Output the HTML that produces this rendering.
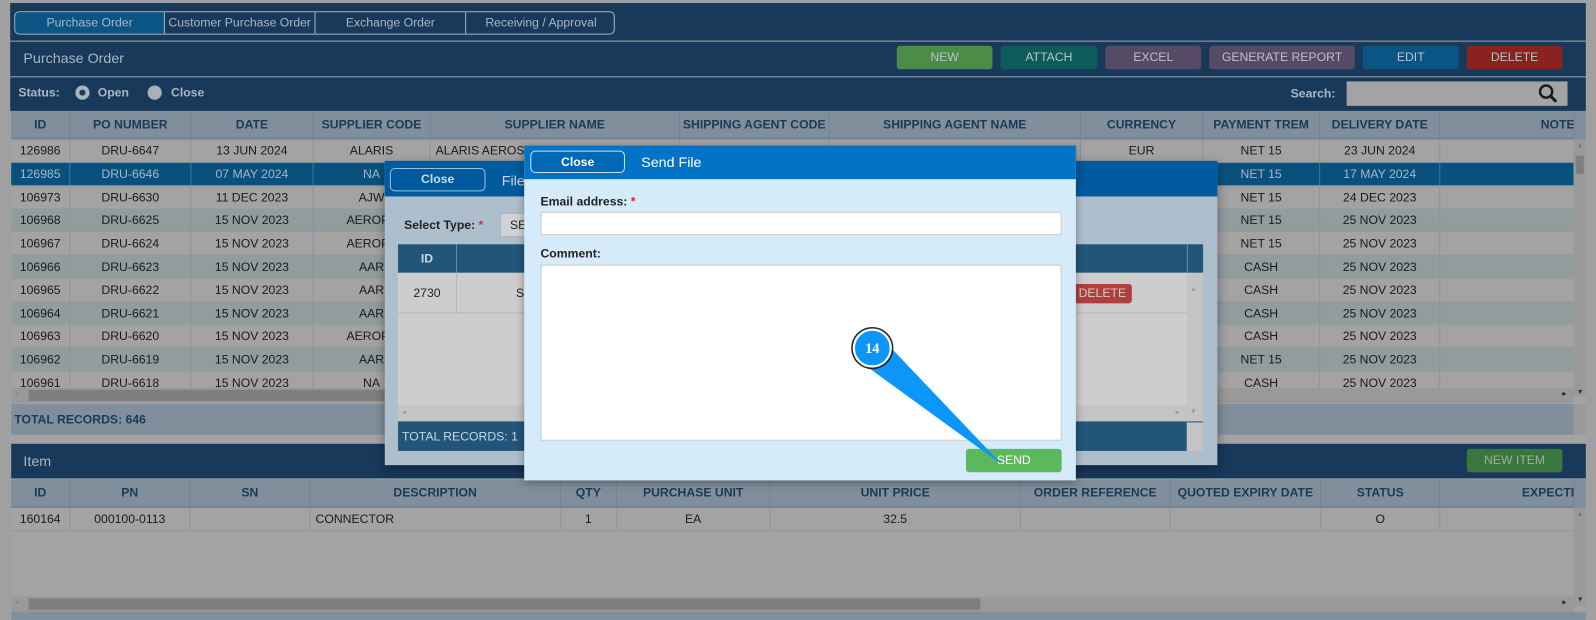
<!DOCTYPE html>
<html><head><meta charset="utf-8">
<style>
html,body{margin:0;padding:0;width:1596px;height:620px;overflow:hidden;background:#a0a0a0;font-family:"Liberation Sans",Arial,sans-serif;}
#w{position:absolute;left:0;top:0;width:1568px;height:609px;transform:scale(1.01786);transform-origin:0 0;}
.a{position:absolute;box-sizing:border-box;}
.bar{background:#18395a;}
.btn{position:absolute;height:23px;top:45px;border-radius:3px;color:#b9c3cc;font-size:12px;text-align:center;line-height:23px;}
.hd{position:absolute;background:#808f9b;color:#1b3a57;font-weight:bold;font-size:12px;overflow:hidden;}
.hd div,.row div{position:absolute;top:0;height:100%;box-sizing:border-box;text-align:center;border-right:1px solid #74848f;}
.hd div{display:flex;align-items:center;justify-content:center;white-space:nowrap;}
.row{position:absolute;left:11px;width:1535px;height:23px;font-size:12px;color:#1a1a1a;line-height:23px;border-bottom:1px solid #979797;box-sizing:border-box;}
.row div{border-right:1px solid #939393;white-space:nowrap;overflow:hidden;}
.r0{background:#a3a3a3;}.r1{background:#909c9e;}
.sel{background:#08517e;color:#a7b8c6;}
.sel div{border-right-color:#3a7aa0;}
</style></head><body><div id="w">
<div class="a" style="left:10px;top:3px;width:1548px;height:606px;background:#a3a3a3;"></div>
<div class="a bar" style="left:10px;top:3px;width:1548px;height:37px;"></div>
<div class="a" style="left:14px;top:11px;width:590px;height:23px;border:1px solid #a9b6c1;border-radius:5px;overflow:hidden;font-size:12px;color:#a9b7c4;line-height:21px;">
 <div class="a" style="left:0;top:0;width:146px;height:21px;background:#0b5584;text-align:center;">Purchase Order</div>
 <div class="a" style="left:146px;top:0;width:148px;height:21px;border-left:1px solid #a9b6c1;text-align:center;">Customer Purchase Order</div>
 <div class="a" style="left:294px;top:0;width:148px;height:21px;border-left:1px solid #a9b6c1;text-align:center;">Exchange Order</div>
 <div class="a" style="left:442px;top:0;width:148px;height:21px;border-left:1px solid #a9b6c1;text-align:center;">Receiving / Approval</div>
</div>
<div class="a" style="left:10px;top:40px;width:1548px;height:1px;background:#8a9aa8;"></div>
<div class="a bar" style="left:10px;top:41px;width:1548px;height:34px;"></div>
<div class="a" style="left:23px;top:49px;font-size:14px;color:#a9b7c4;">Purchase Order</div>
<div class="btn" style="left:881px;width:94px;background:#4a8c48;">NEW</div>
<div class="btn" style="left:983px;width:95px;background:#0d5c59;">ATTACH</div>
<div class="btn" style="left:1086px;width:94px;background:#574a66;">EXCEL</div>
<div class="btn" style="left:1188px;width:143px;background:#574a66;">GENERATE REPORT</div>
<div class="btn" style="left:1339px;width:94px;background:#0b5584;">EDIT</div>
<div class="btn" style="left:1441px;width:94px;background:#8a2220;">DELETE</div>
<div class="a" style="left:10px;top:75px;width:1548px;height:1px;background:#8a9aa8;"></div>
<div class="a bar" style="left:10px;top:76px;width:1548px;height:33px;"></div>
<div class="a" style="left:18px;top:84px;font-size:12px;font-weight:bold;color:#a9b7c4;">Status:</div>
<div class="a" style="left:74px;top:84px;width:14px;height:14px;border-radius:50%;background:#a8b4be;"><div class="a" style="left:4px;top:4px;width:6px;height:6px;border-radius:50%;background:#18395a;"></div></div>
<div class="a" style="left:96px;top:84px;font-size:12px;font-weight:bold;color:#a9b7c4;">Open</div>
<div class="a" style="left:145px;top:84px;width:14px;height:14px;border-radius:50%;background:#a8b0b8;"></div>
<div class="a" style="left:168px;top:84px;font-size:12px;font-weight:bold;color:#a9b7c4;">Close</div>
<div class="a" style="left:1268px;top:85px;font-size:12px;font-weight:bold;color:#a9b7c4;">Search:</div>
<div class="a" style="left:1323px;top:80px;width:217px;height:24px;background:#a3a3a3;"></div>
<svg class="a" style="left:1510px;top:82px" width="22" height="20" viewBox="0 0 22 20"><circle cx="9" cy="8" r="6" fill="none" stroke="#1a1a1a" stroke-width="2.4"/><path d="M13.5 12.5 L18 17" stroke="#1a1a1a" stroke-width="3" stroke-linecap="round"/></svg>
<div class="hd" style="left:11px;top:109px;width:1535px;height:28px;border-bottom:2px solid #72838f;box-sizing:border-box;">
<div style="left:0;width:58px">ID</div><div style="left:58px;width:119px">PO NUMBER</div><div style="left:177px;width:120px">DATE</div><div style="left:297px;width:115px">SUPPLIER CODE</div><div style="left:412px;width:245px">SUPPLIER NAME</div><div style="left:657px;width:147px">SHIPPING AGENT CODE</div><div style="left:804px;width:247px">SHIPPING AGENT NAME</div><div style="left:1051px;width:120px">CURRENCY</div><div style="left:1171px;width:115px">PAYMENT TREM</div><div style="left:1286px;width:118px">DELIVERY DATE</div><div style="left:1404px;width:150px;justify-content:flex-end;border:none;padding-right:10px;">NOTES</div>
</div>
<div class="a" style="left:1546px;top:109px;width:12px;height:28px;background:#808f9b;border-left:1px solid #74848f;"></div>
<div id="rows"></div>
<div class="a" style="left:1546px;top:137px;width:12px;height:252px;background:#9a9a9a;"></div>
<div class="a" style="left:1548px;top:153px;width:8px;height:18px;background:#7e7e7e;"></div>
<div class="a" style="left:1549px;top:140px;font-size:7px;color:#777;">▲</div>
<div class="a" style="left:1549px;top:382px;font-size:7px;color:#333;">▼</div>
<div class="a" style="left:11px;top:381px;width:1535px;height:15px;background:#999;"></div>
<div class="a" style="left:28px;top:383px;width:350px;height:11px;background:#7e7e7e;"></div>
<div class="a" style="left:14px;top:382px;font-size:8px;color:#888;">◂</div>
<div class="a" style="left:1535px;top:382px;font-size:8px;color:#222;">▸</div>
<div class="a" style="left:11px;top:397px;width:1535px;height:30px;background:#808f9b;"></div>
<div class="a" style="left:1546px;top:397px;width:12px;height:30px;background:#9a9a9a;"></div>
<div class="a" style="left:14px;top:405px;font-size:12px;font-weight:bold;color:#1b3a57;">TOTAL RECORDS: 646</div>
<div class="a bar" style="left:11px;top:436px;width:1547px;height:34px;"></div>
<div class="a" style="left:23px;top:445px;font-size:14px;color:#a9b7c4;">Item</div>
<div class="a" style="left:1441px;top:441px;width:94px;height:23px;border-radius:3px;background:#3a773c;color:#9cb0a0;font-size:12px;text-align:center;line-height:23px;">NEW ITEM</div>
<div class="hd" style="left:11px;top:471px;width:1535px;height:28px;border-bottom:2px solid #72838f;box-sizing:border-box;">
<div style="left:0;width:58px">ID</div><div style="left:58px;width:118px">PN</div><div style="left:176px;width:118px">SN</div><div style="left:294px;width:246px">DESCRIPTION</div><div style="left:540px;width:55px">QTY</div><div style="left:595px;width:151px">PURCHASE UNIT</div><div style="left:746px;width:246px">UNIT PRICE</div><div style="left:992px;width:147px">ORDER REFERENCE</div><div style="left:1139px;width:148px">QUOTED EXPIRY DATE</div><div style="left:1287px;width:117px">STATUS</div><div style="left:1404px;width:190px;justify-content:flex-end;border:none;padding-right:10px;">EXPECTED DATE</div>
</div>
<div class="a" style="left:1546px;top:471px;width:12px;height:28px;background:#808f9b;border-left:1px solid #74848f;"></div>
<div class="row r0" style="top:499px;">
<div style="left:0;width:58px">160164</div><div style="left:58px;width:118px">000100-0113</div><div style="left:176px;width:118px"></div><div style="left:294px;width:246px;text-align:left;padding-left:5px">CONNECTOR</div><div style="left:540px;width:55px">1</div><div style="left:595px;width:151px">EA</div><div style="left:746px;width:246px">32.5</div><div style="left:992px;width:147px"></div><div style="left:1139px;width:148px"></div><div style="left:1287px;width:117px">O</div><div style="left:1404px;width:131px;border:none"></div>
</div>
<div class="a" style="left:1546px;top:499px;width:12px;height:97px;background:#9a9a9a;"></div>
<div class="a" style="left:1549px;top:502px;font-size:7px;color:#777;">▲</div>
<div class="a" style="left:1549px;top:586px;font-size:7px;color:#333;">▼</div>
<div class="a" style="left:11px;top:586px;width:1535px;height:15px;background:#999;"></div>
<div class="a" style="left:28px;top:588px;width:935px;height:11px;background:#7e7e7e;"></div>
<div class="a" style="left:14px;top:587px;font-size:8px;color:#888;">◂</div>
<div class="a" style="left:1535px;top:587px;font-size:8px;color:#222;">▸</div>
<div class="a" style="left:11px;top:601px;width:1547px;height:8px;background:#808f9b;"></div>

<div class="a" style="left:378px;top:158px;width:818px;height:299px;background:#adbfcc;box-shadow:0 4px 10px rgba(0,0,0,.4);"></div>
<div class="a" style="left:378px;top:158px;width:818px;height:35px;background:#005a9e;"></div>
<div class="a" style="left:383px;top:165px;width:94px;height:23px;border:1px solid #9ec0dc;border-radius:5px;color:#c9dced;font-size:12px;font-weight:bold;text-align:center;line-height:21px;">Close</div>
<div class="a" style="left:493px;top:169px;font-size:14px;color:#c9dced;">File</div>
<div class="a" style="left:397px;top:214px;font-size:12px;font-weight:bold;color:#222;">Select Type: <span style="color:#c33">*</span></div>
<div class="a" style="left:491px;top:209px;width:40px;height:24px;background:#cfd3d6;border:1px solid #aab;font-size:12px;line-height:22px;padding-left:9px;color:#222;">SE</div>
<div class="a" style="left:391px;top:240px;width:791px;height:28px;background:#22557a;"></div>
<div class="a" style="left:391px;top:240px;width:58px;height:28px;color:#c9d6e2;font-size:12px;font-weight:bold;text-align:center;line-height:28px;border-right:1px solid #6a8aa8;">ID</div>
<div class="a" style="left:1166px;top:240px;width:1px;height:28px;background:#6a8aa8;"></div>
<div class="a" style="left:391px;top:268px;width:775px;height:130px;background:#cdcdcd;"></div>
<div class="a" style="left:391px;top:268px;width:775px;height:40px;border-bottom:1px solid #b8b8b8;"></div>
<div class="a" style="left:391px;top:268px;width:58px;height:40px;border-right:1px solid #b8b8b8;font-size:12px;text-align:center;line-height:40px;color:#222;">2730</div>
<div class="a" style="left:507px;top:281px;font-size:12px;color:#222;">S</div>
<div class="a" style="left:1054px;top:279px;width:58px;height:19px;background:#b0403e;border-radius:3px;color:#d8c8c8;font-size:12px;line-height:19px;text-align:center;">DELETE</div>
<div class="a" style="left:1166px;top:268px;width:16px;height:146px;background:#c4c4c4;"></div>
<div class="a" style="left:1169px;top:281px;font-size:7px;color:#999;">▲</div>
<div class="a" style="left:1169px;top:401px;font-size:7px;color:#999;">▼</div>
<div class="a" style="left:391px;top:398px;width:775px;height:16px;background:#c4c4c4;"></div>
<div class="a" style="left:395px;top:400px;font-size:8px;color:#999;">◂</div>
<div class="a" style="left:1155px;top:400px;font-size:8px;color:#999;">▸</div>
<div class="a" style="left:391px;top:414px;width:775px;height:29px;background:#22557a;"></div>
<div class="a" style="left:1166px;top:414px;width:16px;height:29px;background:#c4c4c4;border-top:1px solid #22557a;"></div>
<div class="a" style="left:395px;top:422px;font-size:12px;color:#c9d6e2;">TOTAL RECORDS: 1</div>

<div class="a" style="left:515px;top:143px;width:542px;height:329px;background:#d6ebf9;box-shadow:0 2px 8px rgba(0,0,0,.35);"></div>
<div class="a" style="left:515px;top:143px;width:542px;height:33px;background:#0073c6;"></div>
<div class="a" style="left:521px;top:148px;width:93px;height:22px;border:1px solid #cfe3f5;border-radius:5px;background:#0068b5;color:#fff;font-size:12px;font-weight:bold;text-align:center;line-height:20px;">Close</div>
<div class="a" style="left:630px;top:151px;font-size:14px;color:#fff;">Send File</div>
<div class="a" style="left:531px;top:191px;font-size:12px;font-weight:bold;color:#222;">Email address: <span style="color:#d22">*</span></div>
<div class="a" style="left:531px;top:208px;width:512px;height:23px;background:#fff;border:1px solid #c8c8c8;"></div>
<div class="a" style="left:531px;top:242px;font-size:12px;font-weight:bold;color:#222;">Comment:</div>
<div class="a" style="left:531px;top:260px;width:512px;height:173px;background:#fff;border:1px solid #c8c8c8;"></div>
<div class="a" style="left:949px;top:441px;width:94px;height:23px;background:#5cb85c;border-radius:3px;color:#fff;font-size:12px;text-align:center;line-height:23px;">SEND</div>

<svg class="a" style="left:0;top:0" width="1568" height="609">
<polygon points="868,334 846,356 985,457" fill="#0b96f8"/>
<circle cx="857" cy="342" r="18" fill="#0b96f8" stroke="#fff" stroke-width="2"/>
<circle cx="857" cy="342" r="20" fill="none" stroke="#222" stroke-width="1.5"/>
<text x="857" y="347" text-anchor="middle" font-family="Liberation Serif,serif" font-weight="bold" font-size="14" fill="#fff">14</text>
</svg>
</div>
<script>
var d=[["126986","DRU-6647","13 JUN 2024","ALARIS","ALARIS AEROSPACE","","","EUR","NET 15","23 JUN 2024"],
["126985","DRU-6646","07 MAY 2024","NA","","","","","NET 15","17 MAY 2024"],
["106973","DRU-6630","11 DEC 2023","AJW","","","","","NET 15","24 DEC 2023"],
["106968","DRU-6625","15 NOV 2023","AEROPA","","","","","NET 15","25 NOV 2023"],
["106967","DRU-6624","15 NOV 2023","AEROPA","","","","","NET 15","25 NOV 2023"],
["106966","DRU-6623","15 NOV 2023","AAR","","","","","CASH","25 NOV 2023"],
["106965","DRU-6622","15 NOV 2023","AAR","","","","","CASH","25 NOV 2023"],
["106964","DRU-6621","15 NOV 2023","AAR","","","","","CASH","25 NOV 2023"],
["106963","DRU-6620","15 NOV 2023","AEROPA","","","","","CASH","25 NOV 2023"],
["106962","DRU-6619","15 NOV 2023","AAR","","","","","NET 15","25 NOV 2023"],
["106961","DRU-6618","15 NOV 2023","NA","","","","","CASH","25 NOV 2023"]];
var c=[[0,58],[58,119],[177,120],[297,115],[412,245],[657,147],[804,247],[1051,120],[1171,115],[1286,118],[1404,131]];
var h="";
d.forEach(function(r,i){var cl=i==1?"sel":(i>=3&&i%2==1?"r1":"r0");
h+='<div class="row '+cl+'" style="top:'+(137+i*22.8)+'px">';
c.forEach(function(k,j){var t=r[j]||"";var st=j==4?"text-align:left;padding-left:5px;":"";h+='<div style="left:'+k[0]+'px;width:'+k[1]+'px;'+st+(j==10?'border:none':'')+'">'+t+'</div>';});
h+='</div>';});
document.getElementById("rows").innerHTML=h;
</script>
</body></html>
